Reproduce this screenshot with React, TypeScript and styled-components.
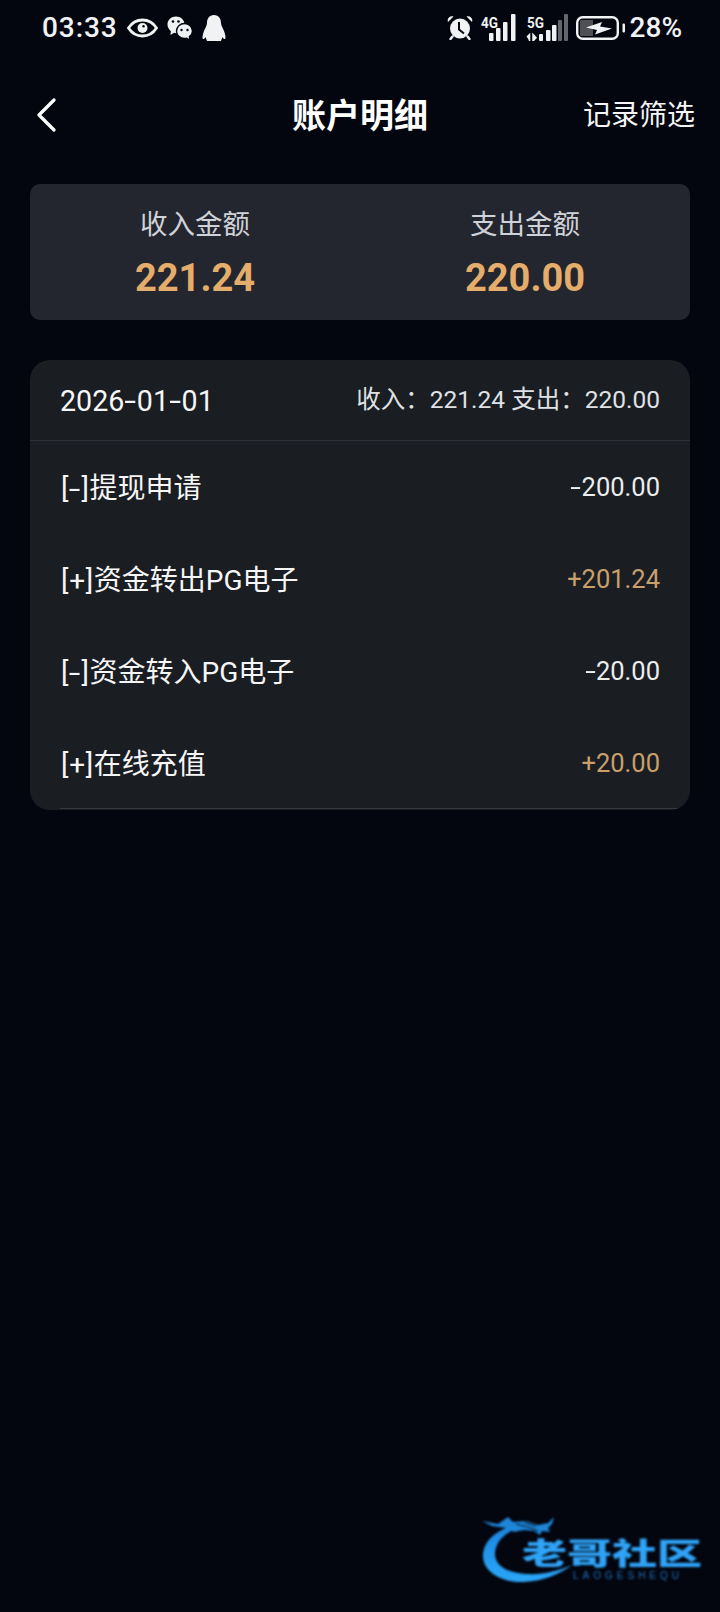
import React from "react";
import styled, { createGlobalStyle } from "styled-components";

const Global = createGlobalStyle`
  html, body { margin: 0; padding: 0; background: #03060f; }
  * { box-sizing: border-box; }
`;

const Page = styled.div`
  position: relative;
  width: 720px;
  height: 1612px;
  overflow: hidden;
  background: #03060f;
  color: #fff;
  font-family: Roboto, "Noto Sans CJK SC", sans-serif;
`;

const StatusBar = styled.div`
  height: 54px;
  padding: 1px 38px 0 42px;
  display: flex;
  align-items: center;
  justify-content: space-between;
  color: #f1f2f4;
`;
const StatusGroup = styled.div<{ $gap: number }>`
  display: flex;
  align-items: center;
  gap: ${(p) => p.$gap}px;
`;
const Time = styled.span`
  font-size: 28px;
  line-height: 1;
  font-weight: 500;
  letter-spacing: 0.9px;
  width: 76px;
  white-space: nowrap;
`;
const Percent = styled.span`
  font-size: 28px;
  line-height: 1;
  font-weight: 500;
  margin-left: -3px;
`;

const Nav = styled.div`
  height: 92px;
  margin-top: 15px;
  padding: 0 25px;
  display: grid;
  grid-template-columns: 1fr auto 1fr;
  align-items: center;
`;
const Back = styled.div`
  display: flex;
  align-items: center;
  padding-left: 11px;
`;
const Title = styled.div`
  font-size: 34px;
  font-weight: 700;
  line-height: 1;
  padding-top: 2px;
`;
const Filter = styled.div`
  justify-self: end;
  font-size: 28px;
  line-height: 1;
  color: #f4f5f6;
  padding-top: 1px;
`;

const Summary = styled.div`
  margin: 23px 30px 0;
  height: 136px;
  border-radius: 10px;
  background: #23262e;
  display: grid;
  grid-template-columns: 1fr 1fr;
`;
const SummaryCell = styled.div`
  display: flex;
  flex-direction: column;
  align-items: center;
  padding-top: 25px;
`;
const SummaryLabel = styled.div`
  font-size: 27.5px;
  line-height: 32px;
  color: #cfd2d8;
`;
const SummaryValue = styled.div`
  margin-top: 15px;
  font-size: 38px;
  line-height: 44px;
  font-weight: 700;
  color: #e5ad6b;
`;

const List = styled.div`
  margin: 40px 30px 0;
  height: 450px;
  border-radius: 20px;
  background: #1a1d22;
  overflow: hidden;
`;
const ListHead = styled.div`
  height: 81px;
  padding: 0 30px;
  display: flex;
  align-items: center;
  justify-content: space-between;
  border-bottom: 1px solid #2e3137;
`;
const DateText = styled.div`
  font-size: 28.6px;
  line-height: 1;
  color: #f6f6f7;
  margin-top: 2px;
`;
const Totals = styled.div`
  font-size: 24.5px;
  line-height: 1;
  color: #dfe1e5;
`;
const Row = styled.div`
  height: 92px;
  padding: 2px 30px 0 31px;
  display: flex;
  align-items: center;
  justify-content: space-between;
  &:last-child {
    background: linear-gradient(#34373c, #34373c) no-repeat 30px 100% / calc(100% - 30px) 1px;
  }
`;
const RowName = styled.div`
  font-size: 28px;
  line-height: 1;
  color: #f6f6f7;
  margin-top: 2px;
`;
const Mark = styled.span`
  letter-spacing: 0.7px;
`;
const RowAmount = styled.div<{ $plus: boolean }>`
  font-size: 25.5px;
  line-height: 1;
  color: ${(p) => (p.$plus ? "#c9a06c" : "#eceded")};
`;
const Dash = styled.span`
  display: inline-block;
  width: 0.44em;
  text-align: center;
  transform: scaleX(1.5);
`;

const Logo = styled.div`
  position: absolute;
  left: 482px;
  top: 1516px;
  width: 226px;
  height: 72px;
  filter: blur(0.9px);
`;
const LogoName = styled.div`
  position: absolute;
  left: 40px;
  top: 20px;
  font-size: 30px;
  line-height: 36px;
  font-weight: 900;
  color: #2fa3f7;
  transform: scaleX(1.5);
  transform-origin: left center;
  white-space: nowrap;
`;
const LogoSub = styled.div`
  position: absolute;
  left: 91px;
  top: 54px;
  font-size: 10px;
  line-height: 12px;
  letter-spacing: 4px;
  color: #1d6fb8;
  font-family: "Liberation Sans", sans-serif;
  white-space: nowrap;
`;

const Eye = () => (
  <svg width="31" height="20" viewBox="0 0 31 20" fill="none">
    <path d="M1.500 10C5 4.500 10 2 15.500 2S26 4.500 29.500 10C26 15.500 21 18 15.500 18S5 15.500 1.500 10Z" stroke="currentColor" strokeWidth="2.800" />
    <circle cx="15.500" cy="10" r="5" fill="currentColor" />
    <circle cx="16.500" cy="8.300" r="1.200" fill="#03060f" />
  </svg>
);

const WeChat = () => (
  <svg width="26" height="24" viewBox="0 0 26 24">
    <path d="M9 0.500C4.300 0.500.5 4 .5 8.500c0 2.600 1.300 4.900 3.300 6.400L3.500 19l3.600-2.300c.6.100 1.300.2 1.900.2 4.700 0 8.500-3.800 8.500-8.400S13.700.5 9 .5Z" fill="currentColor" />
    <path d="M17.500 7.500c-4.400 0-8 3.300-8 7.500s3.600 7.500 8 7.500c.8 0 1.500-.1 2.200-.3l3.300 1.800-.6-3.400c1.900-1.400 3.100-3.400 3.100-5.600 0-4.200-3.600-7.500-8-7.500Z" fill="currentColor" stroke="#03060f" strokeWidth="1.400" />
    <circle cx="6" cy="5.500" r="1.300" fill="#03060f" />
    <circle cx="11.500" cy="5.500" r="1.300" fill="#03060f" />
    <circle cx="14.500" cy="14" r="1.200" fill="#03060f" />
    <circle cx="20.500" cy="14" r="1.200" fill="#03060f" />
  </svg>
);

const QQ = () => (
  <svg width="24" height="26" viewBox="0 0 24 26">
    <path d="M12 0C7 0 5 4 5 8C5 11 3 13 2 16C.5 20 0 23 1 24C2 24.500 3 23 3.500 22C4 24 5 25 5 26H19C19 25 20 24 20.500 22C21 23 22 24.500 23 24C24 23 23.500 20 22 16C21 13 19 11 19 8C19 4 17 0 12 0Z" fill="currentColor" />
  </svg>
);

const Alarm = () => (
  <svg width="26" height="25" viewBox="0 0 26 25">
    <circle cx="13" cy="13.500" r="10" fill="currentColor" />
    <path d="M1 7 6.500 1.500C3.500.2-.5 3 1 7ZM25 7 19.500 1.500C22.500.2 26.500 3 25 7Z" fill="currentColor" />
    <path d="M5.500 21.500 3.500 24M20.500 21.500l2 2.500" stroke="currentColor" strokeWidth="2.400" strokeLinecap="round" />
    <path d="M12 7v7.500l5 4" stroke="#03060f" strokeWidth="2" fill="none" />
  </svg>
);

const SignalFour = () => (
  <svg width="37" height="27" viewBox="0 0 37 27">
    <text x="0" y="14" fontFamily="Roboto, sans-serif" fontWeight="700" fontSize="15" textLength="17" lengthAdjust="spacingAndGlyphs" fill="currentColor">4G</text>
    <rect x="8" y="19" width="4.500" height="8" rx="1" fill="currentColor" />
    <rect x="15" y="14" width="4.500" height="13" rx="1" fill="currentColor" />
    <rect x="22" y="8" width="4.500" height="19" rx="1" fill="currentColor" />
    <rect x="30" y="0" width="4.500" height="27" rx="1" fill="currentColor" />
  </svg>
);

const SignalFive = () => (
  <svg width="42" height="27" viewBox="0 0 42 27">
    <text x="1" y="14" fontFamily="Roboto, sans-serif" fontWeight="700" fontSize="15" textLength="17" lengthAdjust="spacingAndGlyphs" fill="currentColor">5G</text>
    <path d="M3.500 27v-6.500L1 23M7 20.500V27l3-3.200z" stroke="currentColor" strokeWidth="1.500" fill="currentColor" />
    <rect x="13" y="20" width="4" height="7" rx="1" fill="currentColor" />
    <rect x="20" y="16" width="4.500" height="11" rx="1" fill="currentColor" />
    <rect x="26" y="11" width="4.500" height="16" rx="1" fill="currentColor" />
    <rect x="32" y="6" width="4" height="21" rx="1" fill="#63666b" />
    <rect x="38" y="0" width="4" height="27" rx="1" fill="#63666b" />
  </svg>
);

const Battery = () => (
  <svg width="49" height="24" viewBox="0 0 49 24">
    <rect x="1.200" y="1.200" width="40.600" height="21.600" rx="5.500" fill="none" stroke="currentColor" strokeWidth="2.400" />
    <path d="M4 5.500a1.500 1.500 0 0 1 1.500-1.500H17V20H5.500A1.500 1.500 0 0 1 4 18.500Z" fill="#4e5054" />
    <path d="M10 11.500 26 6 24 10.500 36 12.500 19 18.500 21 14Z" fill="currentColor" />
    <rect x="46.500" y="7.500" width="2.500" height="9" rx="1" fill="currentColor" />
  </svg>
);

const Chevron = () => (
  <svg width="20" height="34" viewBox="0 0 20 34" fill="none">
    <path d="M18 2 3 17l15 15" stroke="#fff" strokeWidth="3.200" strokeLinecap="round" strokeLinejoin="round" />
  </svg>
);

const Dragon = () => (
  <svg width="226" height="72" viewBox="0 0 226 72">
    <defs>
      <linearGradient id="ring" x1="0" y1="0" x2="0" y2="1">
        <stop offset="0" stopColor="#1c86e0" />
        <stop offset="1" stopColor="#2aa6f8" />
      </linearGradient>
    </defs>
    <path d="M30 10C10 16 1 28 1 40C1 56 20 67 42 66C62 65 78 58 90 49C76 55 60 59 44 58C26 57 13 50 13 38C13 28 20 18 34 13Z" fill="url(#ring)" />
    <path d="M0 5 16 8 26 1 31 6 44 5 56 9 66 7 72 1 70 8 66 12 68 16 60 15 58 19 52 15 42 14 32 16 24 12 10 10Z" fill="#1e85d8" />
    <path d="M34 8 46 11 56 15M42 6 54 10" stroke="#03060f" strokeWidth="1" fill="none" />
  </svg>
);

const Dashed = ({ text }: { text: string }) => (
  <>
    {text.split("-").map((part, i) => (
      <React.Fragment key={i}>
        {i > 0 && <Dash>-</Dash>}
        {part}
      </React.Fragment>
    ))}
  </>
);

const rows = [
  { mark: "-", name: "提现申请", amount: "-200.00", plus: false },
  { mark: "+", name: "资金转出PG电子", amount: "+201.24", plus: true },
  { mark: "-", name: "资金转入PG电子", amount: "-20.00", plus: false },
  { mark: "+", name: "在线充值", amount: "+20.00", plus: true },
];

export default function App() {
  return (
    <Page>
      <Global />
      <StatusBar>
        <StatusGroup $gap={9}>
          <Time>03:33</Time>
          <Eye />
          <WeChat />
          <QQ />
        </StatusGroup>
        <StatusGroup $gap={8}>
          <Alarm />
          <SignalFour />
          <SignalFive />
          <Battery />
          <Percent>28%</Percent>
        </StatusGroup>
      </StatusBar>
      <Nav>
        <Back>
          <Chevron />
        </Back>
        <Title>账户明细</Title>
        <Filter>记录筛选</Filter>
      </Nav>
      <Summary>
        <SummaryCell>
          <SummaryLabel>收入金额</SummaryLabel>
          <SummaryValue>221.24</SummaryValue>
        </SummaryCell>
        <SummaryCell>
          <SummaryLabel>支出金额</SummaryLabel>
          <SummaryValue>220.00</SummaryValue>
        </SummaryCell>
      </Summary>
      <List>
        <ListHead>
          <DateText>
            <Dashed text="2026-01-01" />
          </DateText>
          <Totals>收入：221.24 支出：220.00</Totals>
        </ListHead>
        {rows.map((r) => (
          <Row key={r.name}>
            <RowName>
              <Mark>
                [<Dashed text={r.mark} />]
              </Mark>
              {r.name}
            </RowName>
            <RowAmount $plus={r.plus}>
              <Dashed text={r.amount} />
            </RowAmount>
          </Row>
        ))}
      </List>
      <Logo>
        <Dragon />
        <LogoName>老哥社区</LogoName>
        <LogoSub>LAOGESHEQU</LogoSub>
      </Logo>
    </Page>
  );
}
